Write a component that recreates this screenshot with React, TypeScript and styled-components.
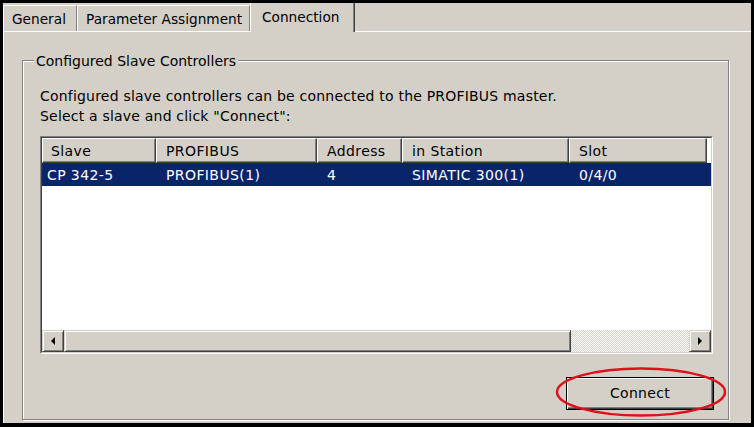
import React from 'react';
import styled, { createGlobalStyle } from 'styled-components';

const Global = createGlobalStyle`
  html, body { margin: 0; padding: 0; background: #000; }
  body { font-family: "DejaVu Sans", "Liberation Sans", Arial, sans-serif; }
`;

const Frame = styled.div`
  width: 754px;
  height: 427px;
  box-sizing: border-box;
  border: solid #000;
  border-width: 3px 3px 4px 3px;
  background: #d4d0c8;
  overflow: hidden;
  display: flex;
  flex-direction: column;
  font-size: 13.7px;
  line-height: 16px;
  color: #000;
`;

const TabStrip = styled.div`
  flex: none;
  height: 28px;
  display: flex;
  align-items: flex-end;
  position: relative;
  z-index: 1;
`;

const Tab = styled.div<{ $w: number; $active?: boolean }>`
  box-sizing: border-box;
  width: ${p => p.$w}px;
  height: ${p => (p.$active ? 31 : 26)}px;
  margin-bottom: ${p => (p.$active ? -1 : 0)}px;
  padding: ${p => (p.$active ? '7px 0 0 11px' : '5px 0 0 8px')};
  background: #d4d0c8;
  border-top: 1px solid #fff;
  border-left: 1px solid #fff;
  border-right: 1px solid #808080;
  box-shadow: 1px 0 0 #404040;
  white-space: nowrap;
`;

const Panel = styled.div`
  flex: 1;
  display: flex;
  flex-direction: column;
  min-height: 0;
  border-top: 1px solid #fff;
  border-left: 1px solid #fff;
  padding: 28px 22px 0 18px;
`;

const GroupBox = styled.div`
  position: relative;
  height: 360px;
  box-sizing: border-box;
  border: 1px solid #808080;
  box-shadow: inset 1px 1px 0 #fff, 1px 1px 0 #fff;
  padding: 25px 15px 0 17px;
  display: flex;
  flex-direction: column;
`;

const GroupLabel = styled.span`
  position: absolute;
  top: -8px;
  left: 11px;
  padding: 0 2px;
  font-size: 14px;
  background: #d4d0c8;
`;

const Description = styled.div`
  font-size: 14px;
  letter-spacing: 0.2px;
  line-height: 20px;
  white-space: nowrap;
`;

const ListOuter = styled.div`
  margin-top: 10px;
  height: 218px;
  box-sizing: border-box;
  border: 1px solid;
  border-color: #808080 #fff #fff #808080;
  display: flex;
  font-size: 14px;
  letter-spacing: 0.4px;
`;

const ListInner = styled.div`
  flex: 1;
  border: 1px solid;
  border-color: #404040 #d4d0c8 #d4d0c8 #404040;
  background: #fff;
  display: flex;
  flex-direction: column;
`;

const cols = '114px 161px 85px 167px 138px';

const HeaderRow = styled.div`
  display: grid;
  grid-template-columns: ${cols};
  height: 25px;
  flex: none;
`;

const HeaderCell = styled.div<{ $first?: boolean }>`
  box-sizing: border-box;
  background: #d4d0c8;
  border-top: 1px solid #fff;
  border-left: 1px solid #fff;
  border-right: 1px solid #404040;
  border-bottom: 1px solid #404040;
  box-shadow: inset -1px -1px 0 #808080;
  padding: 4px 0 0 ${p => (p.$first ? 8 : 9)}px;
  white-space: nowrap;
  overflow: hidden;
`;

const Body = styled.div`
  flex: 1;
  background: #fff;
`;

const Row = styled.div<{ $selected?: boolean }>`
  display: grid;
  grid-template-columns: ${cols};
  height: 23px;
  background: ${p => (p.$selected ? '#0a246a' : '#fff')};
  color: ${p => (p.$selected ? '#fff' : '#000')};
`;

const Cell = styled.div<{ $first?: boolean }>`
  padding: 4px 0 0 ${p => (p.$first ? 5 : 10)}px;
  white-space: nowrap;
`;

const ScrollBar = styled.div`
  flex: none;
  height: 22px;
  display: flex;
  background: #d4d0c8;
`;

const raised = `
  box-sizing: border-box;
  background: #d4d0c8;
  border: 1px solid;
  border-color: #d4d0c8 #404040 #404040 #d4d0c8;
  box-shadow: inset 1px 1px 0 #fff, inset -1px -1px 0 #808080;
`;

const ArrowButton = styled.div`
  ${raised}
  width: 22px;
  height: 22px;
  flex: none;
  display: flex;
  align-items: center;
  justify-content: center;
`;

const Thumb = styled.div`
  ${raised}
  width: 507px;
  flex: none;
`;

const Track = styled.div`
  flex: 1;
  background-color: #d4d0c8;
  background-image: repeating-conic-gradient(#fff 0 25%, #d4d0c8 0 50%);
  background-size: 2px 2px;
`;

const ButtonRow = styled.div`
  margin-top: 23px;
  display: flex;
  justify-content: flex-end;
`;

const ButtonWrap = styled.div`
  position: relative;
`;

const PushButton = styled.button`
  box-sizing: border-box;
  width: 148px;
  height: 33px;
  margin-right: -1px;
  background: #d4d0c8;
  border: 1px solid #000;
  box-shadow: inset 1px 1px 0 #fff, inset -1px -1px 0 #404040, inset -2px -2px 0 #808080;
  font-family: inherit;
  font-size: 14px;
  letter-spacing: 0.3px;
  line-height: 16px;
  color: #000;
  padding: 0 0 2px 0;
  display: flex;
  align-items: center;
  justify-content: center;
`;

const Annotation = styled.svg`
  position: absolute;
  left: -11px;
  top: -10px;
  pointer-events: none;
`;

const Arrow = ({ dir }: { dir: 'left' | 'right' }) => (
  <svg width="6" height="8" viewBox="0 0 6 8">
    {dir === 'left' ? <path d="M5 0 L5 8 L1 4 Z" fill="#000" /> : <path d="M1 0 L1 8 L5 4 Z" fill="#000" />}
  </svg>
);

export default function App() {
  const headers = ['Slave', 'PROFIBUS', 'Address', 'in Station', 'Slot'];
  const row = ['CP 342-5', 'PROFIBUS(1)', '4', 'SIMATIC 300(1)', '0/4/0'];
  return (
    <>
      <Global />
      <Frame>
        <TabStrip>
          <Tab $w={74}>General</Tab>
          <Tab $w={173}>Parameter Assignment</Tab>
          <Tab $w={104} $active>Connection</Tab>
        </TabStrip>
        <Panel>
          <GroupBox>
            <GroupLabel>Configured Slave Controllers</GroupLabel>
            <Description>
              Configured slave controllers can be connected to the PROFIBUS master.
              <br />
              Select a slave and click "Connect":
            </Description>
            <ListOuter>
              <ListInner>
                <HeaderRow>
                  {headers.map((h, i) => (
                    <HeaderCell key={h} $first={i === 0}>{h}</HeaderCell>
                  ))}
                </HeaderRow>
                <Body>
                  <Row $selected>
                    {row.map((c, i) => (
                      <Cell key={i} $first={i === 0}>{c}</Cell>
                    ))}
                  </Row>
                </Body>
                <ScrollBar>
                  <ArrowButton><Arrow dir="left" /></ArrowButton>
                  <Thumb />
                  <Track />
                  <ArrowButton><Arrow dir="right" /></ArrowButton>
                </ScrollBar>
              </ListInner>
            </ListOuter>
            <ButtonRow>
              <ButtonWrap>
                <PushButton>Connect</PushButton>
                <Annotation width="172" height="52" viewBox="0 0 172 52">
                  <ellipse cx="86" cy="25" rx="84" ry="23.5" fill="none" stroke="#e0101a" strokeWidth="2.5" />
                </Annotation>
              </ButtonWrap>
            </ButtonRow>
          </GroupBox>
        </Panel>
      </Frame>
    </>
  );
}
